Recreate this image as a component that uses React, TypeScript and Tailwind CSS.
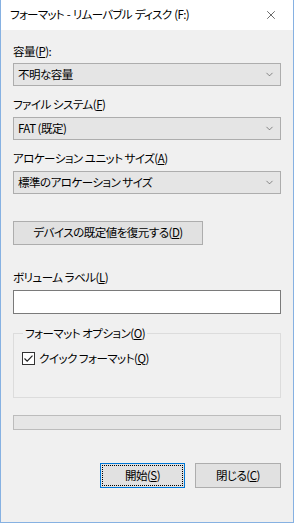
import { X, ChevronDown } from "lucide-react";

const font = "font-['Noto_Sans_CJK_JP','Noto_Sans',sans-serif] [font-feature-settings:'palt'] tracking-[-0.5px]";

function Combo({ value }: { value: string }) {
  return (
    <div className="flex h-[23px] items-center justify-between border border-[#adadad] bg-[#e5e5e5] pl-[4px] pr-[5px]">
      <span>{value}</span>
      <ChevronDown size={11} strokeWidth={1.3} className="text-[#444]" />
    </div>
  );
}

function Label({ text, k, tail = "" }: { text: string; k: string; tail?: string }) {
  return (
    <div className="h-[16px] leading-[16px]">
      {text}(<u>{k}</u>){tail}
    </div>
  );
}

export default function App() {
  return (
    <div className={`${font} flex h-[523px] w-[294px] flex-col border-x border-b border-[#86b1e2] bg-[#f0f0f0] text-[11.5px] text-black`}>
      {/* title bar */}
      <div className="flex h-[30px] shrink-0 items-center justify-between bg-white pl-[9px] pr-[15px]">
        <span className="tracking-[-0.7px] [word-spacing:1px]">フォーマット - リムーバブル ディスク (F:)</span>
        <X size={14} strokeWidth={1} />
      </div>

      <div className="flex flex-col px-3">
        <div className="mt-[13px]">
          <Label text="容量" k="P" tail=":" />
        </div>
        <div className="mt-[4px]">
          <Combo value="不明な容量" />
        </div>

        <div className="mt-[10px]">
          <Label text="ファイル システム" k="F" />
        </div>
        <div className="mt-[5px]">
          <Combo value="FAT (既定)" />
        </div>

        <div className="mt-[10px]">
          <Label text="アロケーション ユニット サイズ" k="A" />
        </div>
        <div className="mt-[5px]">
          <Combo value="標準のアロケーション サイズ" />
        </div>

        <button className="mt-[27px] h-[24px] w-[190px] border border-[#adadad] bg-[#e1e1e1]">
          デバイスの既定値を復元する(<u>D</u>)
        </button>

        <div className="mt-[24px]">
          <Label text="ボリューム ラベル" k="L" />
        </div>
        <div className="mt-[5px] h-[24px] border border-[#7a7a7a] bg-white" />

        <fieldset className="mt-[11px] h-[73px] border border-[#dcdcdc] px-[8px]">
          <legend className="ml-[1px] px-[2px] leading-[16px]">
            フォーマット オプション(<u>O</u>)
          </legend>
          <div className="mt-[9px] flex items-center gap-[4px] leading-[16px]">
            <svg width="13" height="13" viewBox="0 0 13 13">
              <rect x="0.5" y="0.5" width="12" height="12" fill="white" stroke="#333" />
              <path d="M2.5 6.5 L5.2 9.2 L10.5 3.6" fill="none" stroke="#222" strokeWidth="1.2" />
            </svg>
            <span>
              クイック フォーマット(<u>Q</u>)
            </span>
          </div>
        </fieldset>

        <div className="mt-[17px] h-[15px] border border-[#bcbcbc] bg-[#e6e6e6]" />

        <div className="mt-[33px] flex justify-end gap-[10px]">
          <button className="flex h-[25px] w-[85px] items-center justify-center border border-[#0078d7] bg-[#e1e1e1] p-[1px]">
            <span className="flex h-full w-full items-center justify-center border border-dotted border-black">
              <span>
                開始(<u>S</u>)
              </span>
            </span>
          </button>
          <button className="h-[25px] w-[86px] border border-[#adadad] bg-[#e1e1e1]">
            閉じる(<u>C</u>)
          </button>
        </div>
      </div>
    </div>
  );
}
